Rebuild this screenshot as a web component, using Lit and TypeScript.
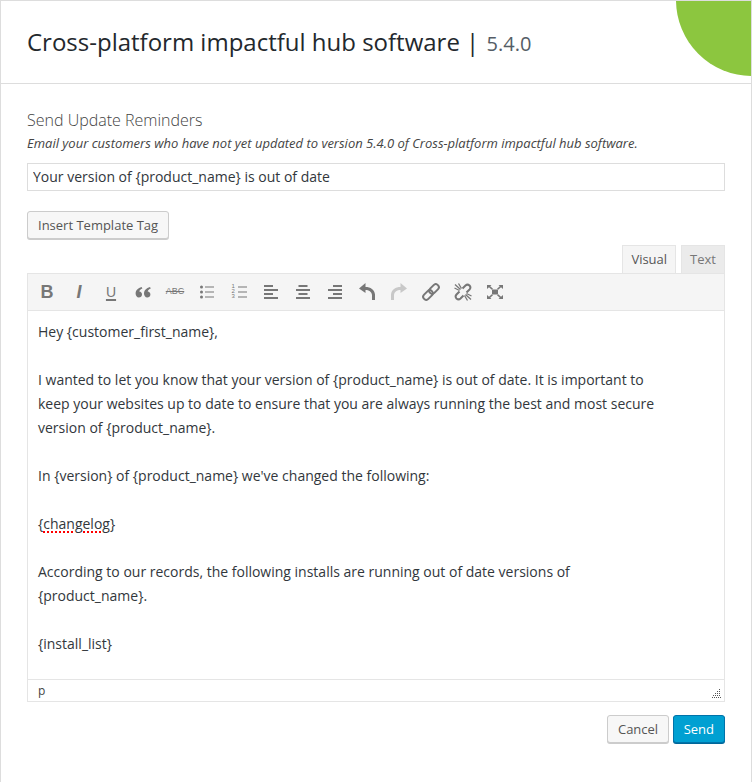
import { LitElement, css, html } from 'lit';
import { customElement } from 'lit/decorators.js';

const icons = {
  bold: html`<span class="glyph bold">B</span>`,
  italic: html`<span class="glyph italic">I</span>`,
  underline: html`<span class="glyph under">U</span>`,
  quote: html`<svg width="16" height="12" viewBox="0 0 16 12">
    <path d="M6.600 1C3 2 .6 4.400.6 7.600.6 10 2 11.500 3.800 11.500S7 10.200 7 8.500 5.900 5.800 4.300 5.600C4.600 4.300 5.700 3.200 7.400 2.600zM15 1c-3.600 1-6 3.400-6 6.600 0 2.400 1.400 3.900 3.200 3.900s3.200-1.300 3.200-3-1.100-2.700-2.700-2.900c.3-1.300 1.400-2.400 3.100-3z" />
  </svg>`,
  strike: html`<span class="glyph strike">ABC</span>`,
  ul: html`<svg width="14" height="14" viewBox="0 0 14 14">
    <circle cx="1.500" cy="2" r="1.500" /><circle cx="1.500" cy="7" r="1.500" /><circle cx="1.500" cy="12" r="1.500" />
    <rect x="5" y="1.500" width="9" height="1" /><rect x="5" y="6.500" width="9" height="1" /><rect x="5" y="11.500" width="9" height="1" />
  </svg>`,
  ol: html`<span class="ol">
    <span class="nums">1<br />2<br />3</span>
    <svg width="9" height="14" viewBox="0 0 9 14">
      <rect y="1.500" width="9" height="1" /><rect y="6.500" width="9" height="1" /><rect y="11.500" width="9" height="1" />
    </svg>
  </span>`,
  left: html`<svg width="14" height="14" viewBox="0 0 14 14">
    <rect y="0" width="9" height="2" /><rect y="4" width="14" height="2" /><rect y="8" width="9" height="2" /><rect y="12" width="14" height="2" />
  </svg>`,
  center: html`<svg width="14" height="14" viewBox="0 0 14 14">
    <rect x="2.500" y="0" width="9" height="2" /><rect y="4" width="14" height="2" /><rect x="2.500" y="8" width="9" height="2" /><rect y="12" width="14" height="2" />
  </svg>`,
  right: html`<svg width="14" height="14" viewBox="0 0 14 14">
    <rect x="5" y="0" width="9" height="2" /><rect y="4" width="14" height="2" /><rect x="5" y="8" width="9" height="2" /><rect y="12" width="14" height="2" />
  </svg>`,
  undo: html`<svg width="16" height="17" viewBox="0 0 16 17">
    <path d="M6.500 0 0 5.500 6.500 10V7c3.500 0 6 1.500 6.500 5v5h3v-5.500C15.500 6.500 11.500 4 6.500 4z" />
  </svg>`,
  redo: html`<svg class="off" width="16" height="17" viewBox="0 0 16 17">
    <path d="M9.500 0 16 5.500 9.500 10V7C6 7 3.500 8.500 3 12v5H0v-5.500C.5 6.500 4.500 4 9.500 4z" />
  </svg>`,
  link: html`<svg width="18" height="18" viewBox="0 0 18 18" fill="none" stroke="#777" stroke-width="2">
    <rect x="0.500" y="9" width="11" height="6" rx="3" transform="rotate(-45 6 12)" />
    <rect x="6.500" y="3" width="11" height="6" rx="3" transform="rotate(-45 12 6)" />
  </svg>`,
  unlink: html`<svg width="18" height="18" viewBox="0 0 18 18" fill="none" stroke="#777" stroke-width="2">
    <path d="M5.500 8.500 2.500 11.500a3 3 0 0 0 0 4 3 3 0 0 0 4 0L9.500 12.500" />
    <path d="M12.500 9.500l3-3a3 3 0 0 0 0-4 3 3 0 0 0-4 0L8.500 5.500" />
    <path stroke-width="1.300" d="M1 1.500 6.500 6.500M4.500 .5 7.500 5.500M.5 5 5.500 7.500M17 16.500 11.500 11.500M13.500 17.500 10.500 12.500M17.500 13 12.500 10.500" />
  </svg>`,
  full: html`<svg width="16" height="14" viewBox="0 0 16 14">
    <rect x="5" y="4.500" width="6" height="5" />
    <path d="M0 0h4.500L3.200 1.300 6 3.700 4.800 4.800 2 2.300 0 4zM16 0h-4.500l1.300 1.300L10 3.700l1.200 1.100L14 2.300 16 4zM0 14h4.500l-1.300-1.300L6 10.300 4.800 9.200 2 11.700 0 10zM16 14h-4.500l1.300-1.300L10 10.300l1.200-1.100 2.800 2.500 2-1.700z" />
  </svg>`,
};

@customElement('app-root')
export class AppRoot extends LitElement {
  static styles = css`
    :host {
      display: block;
      height: 782px;
      box-sizing: border-box;
      border: 1px solid #ddd;
      border-bottom: none;
      font-family: 'Open Sans', sans-serif;
      color: #32373c;
      background: #fff;
      position: relative;
      overflow: hidden;
    }
    * {
      box-sizing: border-box;
    }
    .corner {
      position: absolute;
      top: -1px;
      right: -1px;
      width: 76px;
      height: 76px;
      background: #8cc63f;
      border-bottom-left-radius: 100%;
    }
    header {
      height: 83px;
      border-bottom: 1px solid #ddd;
      padding: 1px 26px 0;
      display: flex;
      align-items: center;
    }
    h1 {
      margin: 0;
      font-size: 24px;
      font-weight: 400;
      color: #23282d;
      line-height: 32px;
      white-space: nowrap;
    }
    h1 small {
      font-size: 20px;
      color: #555d66;
      margin-left: 1px;
    }
    main {
      padding: 25px 26px 0;
    }
    h2 {
      margin: 0;
      font-size: 16px;
      font-weight: 300;
      line-height: 22px;
      color: #444;
    }
    .desc {
      margin: 3px 0 0;
      font-size: 13px;
      font-style: italic;
      line-height: 18px;
      color: #444;
      white-space: nowrap;
    }
    .subject {
      display: block;
      width: 100%;
      height: 28px;
      margin-top: 11px;
      border: 1px solid #ddd;
      padding: 0 5px 2px;
      font: 14px 'Open Sans', sans-serif;
      color: #32373c;
      background: #fff;
      outline: none;
    }
    button {
      font: 13px 'Open Sans', sans-serif;
      height: 28px;
      padding: 0 10px;
      border-radius: 3px;
      border: 1px solid #ccc;
      background: #f7f7f7;
      color: #555;
      box-shadow: 0 1px 0 #ccc;
    }
    .insert {
      display: block;
      margin-top: 20px;
    }
    .tabs {
      display: flex;
      justify-content: flex-end;
      gap: 5px;
      margin-top: 6px;
      height: 28px;
    }
    .tab {
      height: 28px;
      border: 1px solid #e5e5e5;
      border-bottom: none;
      background: #ebebeb;
      color: #777;
      font-size: 13px;
      line-height: 27px;
      padding: 0 8px;
    }
    .tab.on {
      background: #f5f5f5;
      color: #555;
    }
    .editor {
      border: 1px solid #e5e5e5;
      border-top: none;
    }
    .toolbar {
      height: 38px;
      display: flex;
      align-items: center;
      padding: 0 0 1px 3px;
      background: #f5f5f5;
      border-top: 1px solid #e5e5e5;
      border-bottom: 1px solid #e5e5e5;
      fill: #777;
    }
    .btn {
      width: 32px;
      height: 28px;
      display: flex;
      align-items: center;
      justify-content: center;
      color: #777;
    }
    .off {
      fill: #c8c8c8;
    }
    .glyph {
      font-family: 'Liberation Sans', sans-serif;
      line-height: 1;
    }
    .bold {
      font-size: 18px;
      font-weight: 700;
    }
    .italic {
      font-size: 18px;
      font-weight: 700;
      font-style: italic;
    }
    .under {
      font-size: 14px;
      text-decoration: underline;
      text-decoration-thickness: 2px;
      text-underline-offset: 2px;
    }
    .strike {
      font-size: 9px;
      text-decoration: line-through;
    }
    .ol {
      display: flex;
      align-items: center;
      gap: 2px;
    }
    .nums {
      font: 6px/5px 'Liberation Sans', sans-serif;
      width: 4px;
    }
    .content {
      height: 368px;
      padding: 9px 62px 0 10px;
      font-size: 14px;
      line-height: 24px;
      color: #32373c;
    }
    .content p {
      margin: 0 0 24px;
    }
    .spell {
      text-decoration: underline dotted #f00;
      text-decoration-thickness: 1.5px;
      text-underline-offset: 2px;
    }
    .status {
      height: 22px;
      border-top: 1px solid #e5e5e5;
      padding-left: 10px;
      font-size: 12px;
      line-height: 20px;
      display: flex;
      justify-content: space-between;
      align-items: flex-end;
      color: #444;
    }
    .status svg {
      margin: 0 3px 3px 0;
      fill: #555;
    }
    footer {
      display: flex;
      justify-content: flex-end;
      gap: 4px;
      margin-top: 13px;
    }
    .cancel {
      padding: 0 9.500px;
    }
    .send {
      background: #00a0d2;
      border-color: #0073aa;
      box-shadow: 0 1px 0 #006799;
      color: #fff;
      padding: 0 10px;
    }
  `;

  render() {
    return html`
      <div class="corner"></div>
      <header>
        <h1>Cross-platform impactful hub software | <small>5.4.0</small></h1>
      </header>
      <main>
        <h2>Send Update Reminders</h2>
        <p class="desc">
          Email your customers who have not yet updated to version 5.4.0 of
          Cross-platform impactful hub software.
        </p>
        <input class="subject" value="Your version of {product_name} is out of date" />
        <button class="insert">Insert Template Tag</button>
        <div class="tabs">
          <div class="tab on">Visual</div>
          <div class="tab">Text</div>
        </div>
        <div class="editor">
          <div class="toolbar">
            ${Object.values(icons).map((icon) => html`<span class="btn">${icon}</span>`)}
          </div>
          <div class="content">
            <p>Hey {customer_first_name},</p>
            <p>
              I wanted to let you know that your version of {product_name} is out
              of date. It is important to keep your websites up to date to ensure
              that you are always running the best and most secure version of
              {product_name}.
            </p>
            <p>In {version} of {product_name} we've changed the following:</p>
            <p>{<span class="spell">changelog</span>}</p>
            <p>
              According to our records, the following installs are running out of
              date versions of {product_name}.
            </p>
            <p>{install_list}</p>
          </div>
          <div class="status">
            <span>p</span>
            <svg width="9" height="9" viewBox="0 0 9 9">
              <rect x="7" y="0" width="1" height="1" /><rect x="5" y="2" width="1" height="1" />
              <rect x="7" y="2" width="1" height="1" /><rect x="3" y="4" width="1" height="1" />
              <rect x="5" y="4" width="1" height="1" /><rect x="7" y="4" width="1" height="1" />
              <rect x="1" y="6" width="1" height="1" /><rect x="3" y="6" width="1" height="1" />
              <rect x="5" y="6" width="1" height="1" /><rect x="7" y="6" width="1" height="1" />
              <rect x="0" y="8" width="1" height="1" /><rect x="2" y="8" width="1" height="1" />
              <rect x="4" y="8" width="1" height="1" /><rect x="6" y="8" width="1" height="1" />
              <rect x="8" y="8" width="1" height="1" />
            </svg>
          </div>
        </div>
        <footer>
          <button class="cancel">Cancel</button>
          <button class="send">Send</button>
        </footer>
      </main>
    `;
  }
}
